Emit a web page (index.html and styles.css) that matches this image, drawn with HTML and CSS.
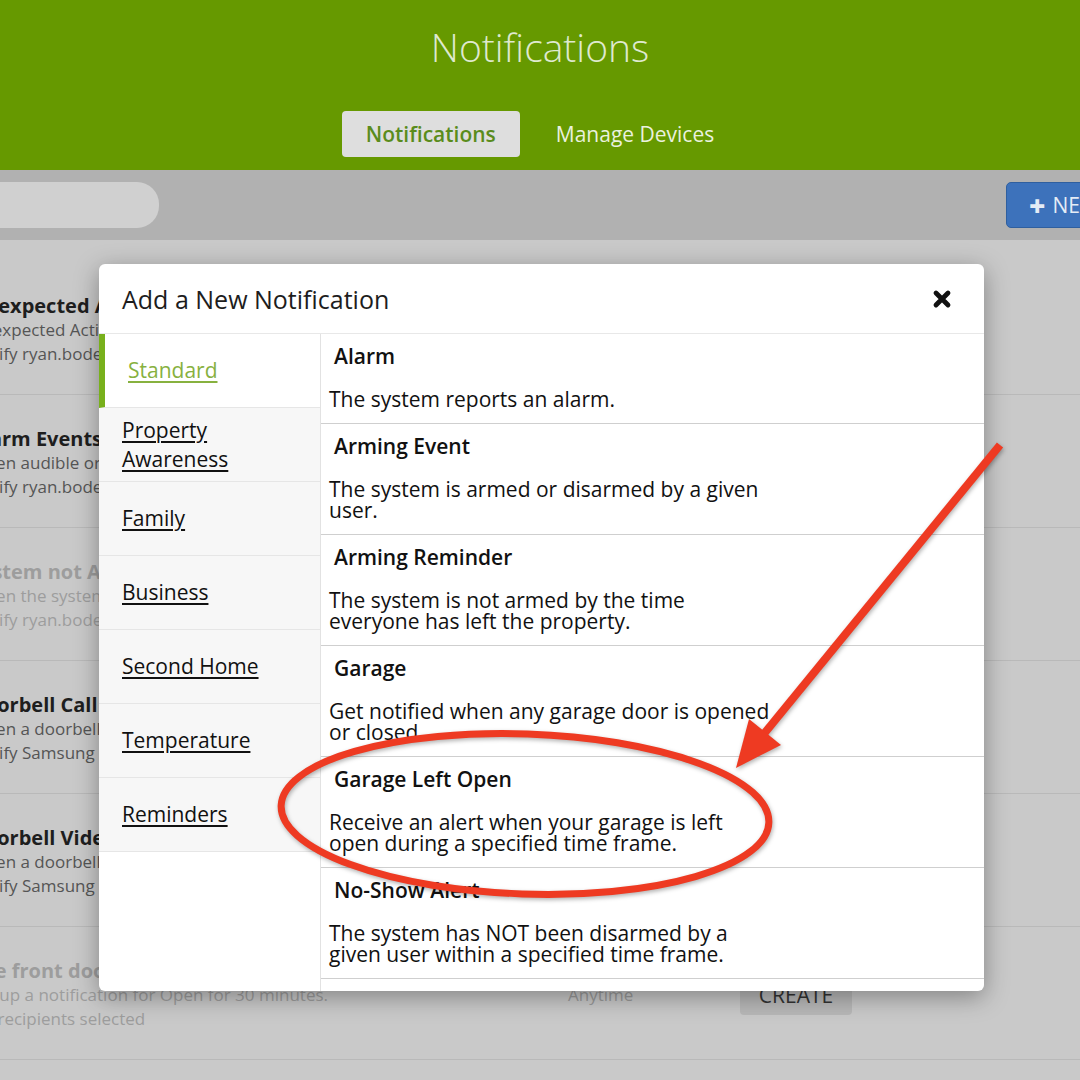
FILE: index.html
```html
<!DOCTYPE html>
<html lang="en">

<head>
	<meta charset="UTF-8">
	<meta name="viewport" content="width=device-width, initial-scale=1.0">
	<title>Notifications</title>
	<link rel="stylesheet" href="styles.css">
</head>

<body>
	<header class="topbar">
		<h1>Notifications</h1>
		<nav class="tabs">
			<a class="tab active">Notifications</a>
			<a class="tab">Manage Devices</a>
		</nav>
	</header>

	<div class="toolbar">
		<input class="search" type="text">
		<button class="new-btn"><span class="plus">+</span> NEW NOTIFICATION</button>
	</div>

	<ul class="notif-list">
		<li class="notif-row">
			<div class="notif-info">
				<div class="notif-title">Unexpected Activity</div>
				<div class="notif-sub">Unexpected Activity during set hours</div>
				<div class="notif-sub">Notify ryan.boden</div>
			</div>
			<div class="notif-time">Anytime</div>
			<button class="row-btn">EDIT</button>
		</li>
		<li class="notif-row">
			<div class="notif-info">
				<div class="notif-title">Alarm Events</div>
				<div class="notif-sub">When audible or silent alarms occur</div>
				<div class="notif-sub">Notify ryan.boden</div>
			</div>
			<div class="notif-time">Anytime</div>
			<button class="row-btn">EDIT</button>
		</li>
		<li class="notif-row off">
			<div class="notif-info">
				<div class="notif-title">System not Armed</div>
				<div class="notif-sub">When the system is not armed</div>
				<div class="notif-sub">Notify ryan.boden</div>
			</div>
			<div class="notif-time">Anytime</div>
			<button class="row-btn">EDIT</button>
		</li>
		<li class="notif-row">
			<div class="notif-info">
				<div class="notif-title">Doorbell Call</div>
				<div class="notif-sub">When a doorbell button is pressed</div>
				<div class="notif-sub">Notify Samsung</div>
			</div>
			<div class="notif-time">Anytime</div>
			<button class="row-btn">EDIT</button>
		</li>
		<li class="notif-row">
			<div class="notif-info">
				<div class="notif-title">Doorbell Video</div>
				<div class="notif-sub">When a doorbell records a clip</div>
				<div class="notif-sub">Notify Samsung</div>
			</div>
			<div class="notif-time">Anytime</div>
			<button class="row-btn">EDIT</button>
		</li>
		<li class="notif-row off">
			<div class="notif-info">
				<div class="notif-title">The front door</div>
				<div class="notif-sub">Set up a notification for Open for 30 minutes.</div>
				<div class="notif-sub">No recipients selected</div>
			</div>
			<div class="notif-time">Anytime</div>
			<button class="row-btn">CREATE</button>
		</li>
	</ul>

	<div class="modal">
		<div class="modal-header">
			<h2>Add a New Notification</h2>
			<button class="close">
				<svg width="20" height="20" viewBox="0 0 20 20">
					<path d="M4 4 L16 16 M16 4 L4 16" stroke="#111" stroke-width="4.8" stroke-linecap="round" />
				</svg>
			</button>
		</div>
		<div class="modal-body">
			<ul class="categories">
				<li class="active"><a>Standard</a></li>
				<li><a>Property<br>Awareness</a></li>
				<li><a>Family</a></li>
				<li><a>Business</a></li>
				<li><a>Second Home</a></li>
				<li><a>Temperature</a></li>
				<li><a>Reminders</a></li>
			</ul>
			<ul class="types">
				<li>
					<div class="type-name">Alarm</div>
					<div class="type-desc">The system reports an alarm.</div>
				</li>
				<li>
					<div class="type-name">Arming Event</div>
					<div class="type-desc">The system is armed or disarmed by a given<br>user.</div>
				</li>
				<li>
					<div class="type-name">Arming Reminder</div>
					<div class="type-desc">The system is not armed by the time<br>everyone has left the property.</div>
				</li>
				<li>
					<div class="type-name">Garage</div>
					<div class="type-desc">Get notified when any garage door is opened<br>or closed.</div>
				</li>
				<li>
					<div class="type-name">Garage Left Open</div>
					<div class="type-desc">Receive an alert when your garage is left<br>open during a specified time frame.</div>
				</li>
				<li>
					<div class="type-name">No-Show Alert</div>
					<div class="type-desc">The system has NOT been disarmed by a<br>given user within a specified time frame.</div>
				</li>
				<li>
					<div class="type-name">Sensor Activity</div>
					<div class="type-desc">A sensor is opened or closed during a<br>specified time frame.</div>
				</li>
			</ul>
		</div>
	</div>

	<!-- red markup drawn over the screenshot -->
	<svg class="markup" width="1080" height="1080" viewBox="0 0 1080 1080">
		<ellipse cx="525" cy="814" rx="244" ry="80" transform="rotate(2 525 814)" fill="none" stroke="#ee3a22" stroke-width="7" />
		<line x1="1000" y1="445" x2="763" y2="735" stroke="#ee3a22" stroke-width="8" />
		<polygon points="736,768 781,745 749,719" fill="#ee3a22" />
	</svg>
</body>

</html>
```

FILE: styles.css
```css
body {
	margin: 0;
	width: 1080px;
	height: 1080px;
	overflow: hidden;
	position: relative;
	font-family: 'Open Sans', 'Lato', sans-serif;
	background: #c9c9c9;
	color: #111;
}

.topbar {
	height: 170px;
	background: #669900;
	display: flex;
	flex-direction: column;
	align-items: center;
	box-sizing: border-box;
	padding-top: 24px;
}

.topbar h1 {
	margin: 0;
	font-size: 39px;
	line-height: 46px;
	font-weight: 300;
	color: #dfe9cf;
}

.tabs {
	display: flex;
	gap: 12px;
	margin-top: 41px;
}

.tab {
	height: 46px;
	padding: 0 24px;
	display: flex;
	align-items: center;
	font-size: 21px;
	color: #eaf1de;
	border-radius: 4px;
}

.tab.active {
	background: #dedede;
	color: #5a8c1c;
	font-weight: 600;
}

.toolbar {
	height: 70px;
	background: #b1b1b1;
	display: flex;
	align-items: center;
	overflow: hidden;
}

.search {
	width: 200px;
	height: 44px;
	margin-left: -45px;
	border: none;
	border-radius: 22px;
	background: #d0d0d0;
}

.new-btn {
	flex-shrink: 0;
	width: 260px;
	height: 46px;
	margin-left: auto;
	margin-right: -186px;
	padding: 0 0 0 22px;
	display: flex;
	align-items: center;
	gap: 7px;
	white-space: nowrap;
	background: #3d72bb;
	border: 1px solid #2f5f9f;
	border-radius: 5px;
	color: #e4ecf6;
	font-family: inherit;
	font-size: 21px;
}

.new-btn .plus {
	font-weight: 800;
	font-size: 28px;
	line-height: 28px;
}

.notif-list {
	list-style: none;
	margin: 0;
	padding: 22px 0 0;
}

.notif-row {
	height: 133px;
	box-sizing: border-box;
	border-bottom: 1px solid #b9b9b9;
	display: flex;
	align-items: center;
	padding-top: 3px;
}

.notif-info {
	flex-shrink: 0;
	width: 598px;
	margin-left: -30px;
	white-space: nowrap;
}

.notif-title {
	font-size: 20px;
	line-height: 24px;
	font-weight: bold;
	color: #1e1e1e;
}

.notif-sub {
	font-size: 17px;
	line-height: 24px;
	color: #555;
}

.notif-row.off .notif-title,
.notif-row.off .notif-sub {
	color: #9d9d9d;
}

.notif-time {
	width: 172px;
	font-size: 17px;
	color: #9a9a9a;
}

.row-btn {
	width: 112px;
	height: 40px;
	border: none;
	border-radius: 4px;
	background: #b8b8b8;
	color: #333;
	font-family: inherit;
	font-size: 21px;
}

.modal {
	position: absolute;
	left: 99px;
	top: 264px;
	width: 885px;
	height: 727px;
	background: #fff;
	border-radius: 6px;
	box-shadow: 0 6px 24px rgba(0, 0, 0, 0.35);
	display: flex;
	flex-direction: column;
	overflow: hidden;
}

.modal-header {
	height: 70px;
	flex-shrink: 0;
	box-sizing: border-box;
	border-bottom: 1px solid #e8e8e8;
	display: flex;
	align-items: center;
	justify-content: space-between;
	padding: 0 32px 0 23px;
}

.modal-header h2 {
	margin: 0;
	font-size: 25px;
	font-weight: normal;
	color: #1d1d1d;
}

.close {
	background: none;
	border: none;
	padding: 0;
	display: flex;
}

.modal-body {
	flex: 1;
	display: flex;
	min-height: 0;
}

.categories {
	width: 221px;
	flex-shrink: 0;
	list-style: none;
	margin: 0;
	padding: 0;
}

.categories li {
	height: 74px;
	box-sizing: border-box;
	background: #f7f7f7;
	border-bottom: 1px solid #e6e6e6;
	display: flex;
	align-items: center;
	padding-left: 23px;
}

.categories li.active {
	background: #fff;
	border-left: 6px solid #78b01c;
}

.categories a {
	font-size: 21px;
	line-height: 29px;
	color: #111;
	text-decoration: underline;
	text-underline-offset: 3px;
}

.categories li.active a {
	color: #87b13f;
}

.types {
	flex: 1;
	list-style: none;
	margin: 0;
	padding: 0;
	border-left: 1px solid #e2e2e2;
	overflow: hidden;
}

.types li {
	border-bottom: 1px solid #cfcfcf;
	padding: 10px 0 13px 8px;
}

.type-name {
	padding-left: 5px;
	font-size: 21px;
	line-height: 24px;
	font-weight: 600;
}

.type-desc {
	margin-top: 21px;
	font-size: 21px;
	line-height: 21px;
	white-space: nowrap;
}

.markup {
	position: absolute;
	left: 0;
	top: 0;
	pointer-events: none;
	filter: drop-shadow(1px 2px 2px rgba(0, 0, 0, 0.3));
}
```
